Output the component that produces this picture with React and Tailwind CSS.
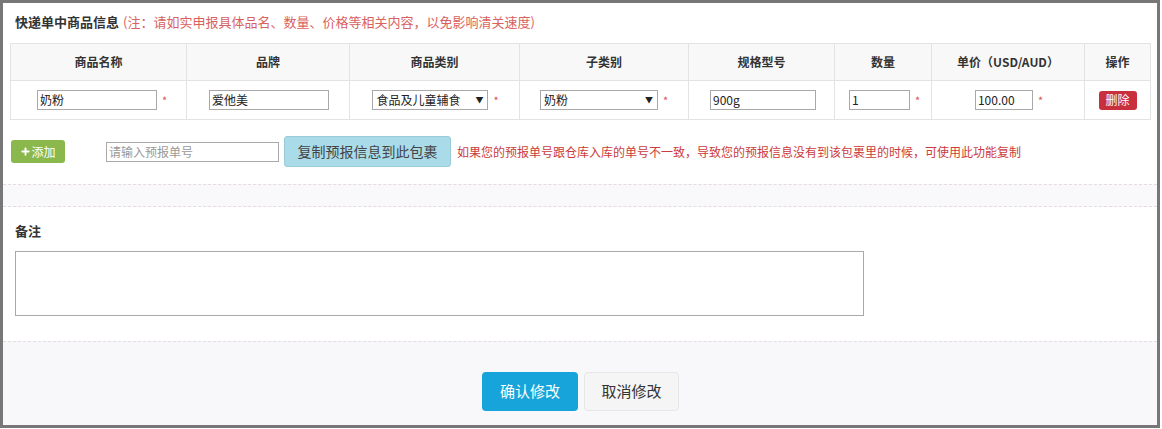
import { Plus } from 'lucide-react'

const font = { fontFamily: '"Noto Sans CJK SC", "Noto Sans", sans-serif' }

const columns = [
  { label: '商品名称', width: 'w-[176px]' },
  { label: '品牌', width: 'w-[163px]' },
  { label: '商品类别', width: 'w-[170px]' },
  { label: '子类别', width: 'w-[169px]' },
  { label: '规格型号', width: 'w-[146px]' },
  { label: '数量', width: 'w-[97px]' },
  { label: '单价（USD/AUD）', width: 'w-[153px]' },
  { label: '操作', width: 'w-[66px]' },
]

function Star() {
  return <span className="ml-[5px] text-[11px] leading-none text-[#d9534f]">*</span>
}

function TextBox({ value, width }) {
  return (
    <div className={`flex h-[20px] items-center border border-[#a9a9a9] bg-white px-[2px] text-[12px] text-[#222] ${width}`}>
      {value}
    </div>
  )
}

function Select({ value, width }) {
  return (
    <div className={`flex h-[20px] items-center justify-between border border-[#a9a9a9] bg-white pl-[3px] pr-[4px] text-[12px] text-[#222] ${width}`}>
      <span>{value}</span>
      <span className="text-[8px]">▼</span>
    </div>
  )
}

export default function App() {
  return (
    <div className="h-[429px] w-[1162px] bg-white" style={font}>
      <div className="flex h-[428px] w-[1160px] flex-col border-[3px] border-[#777777] bg-white">
        <div className="flex h-[40px] items-center pl-[12px] pb-[2px] text-[13px]">
          <span className="font-bold text-[#333]">快递单中商品信息</span>
          <span className="ml-[4px] text-[#d9625f]">(注：请如实申报具体品名、数量、价格等相关内容，以免影响清关速度)</span>
        </div>

        <div className="pl-[7px]">
          <table className="w-[1140px] table-fixed border-collapse text-[12px]">
            <thead>
              <tr className="h-[37px] bg-[#f8f8f8]">
                {columns.map(col => (
                  <th key={col.label} className={`border border-[#e3e3e3] text-center font-bold text-[#333] ${col.width}`}>
                    {col.label}
                  </th>
                ))}
              </tr>
            </thead>
            <tbody>
              <tr className="h-[39px]">
                <td className="border border-[#e3e3e3]">
                  <div className="flex items-center justify-center pl-[7px]"><TextBox value="奶粉" width="w-[120px]" /><Star /></div>
                </td>
                <td className="border border-[#e3e3e3]">
                  <div className="flex items-center justify-center pl-[2px]"><TextBox value="爱他美" width="w-[120px]" /></div>
                </td>
                <td className="border border-[#e3e3e3]">
                  <div className="flex items-center justify-center pl-[2px]"><Select value="食品及儿童辅食" width="w-[116px]" /><Star /></div>
                </td>
                <td className="border border-[#e3e3e3]">
                  <div className="flex items-center justify-center"><Select value="奶粉" width="w-[118px]" /><Star /></div>
                </td>
                <td className="border border-[#e3e3e3]">
                  <div className="flex items-center justify-center pl-[3px]"><TextBox value="900g" width="w-[106px]" /></div>
                </td>
                <td className="border border-[#e3e3e3]">
                  <div className="flex items-center justify-center pl-[3px]"><TextBox value="1" width="w-[61px]" /><Star /></div>
                </td>
                <td className="border border-[#e3e3e3]">
                  <div className="flex items-center justify-center pl-[2px]"><TextBox value="100.00" width="w-[58px]" /><Star /></div>
                </td>
                <td className="border border-[#e3e3e3]">
                  <div className="flex items-center justify-center">
                    <button className="h-[19px] w-[38px] rounded-[3px] bg-[#c9303e] text-[12px] leading-none text-white">删除</button>
                  </div>
                </td>
              </tr>
            </tbody>
          </table>
        </div>

        <div className="mt-[16px] flex h-[31px] items-center pl-[8px]">
          <button className="flex h-[23px] w-[54px] items-center justify-center rounded-[3px] bg-[#8ab84d] text-[12px] text-white">
            <Plus size={11} strokeWidth={4} />
            <span>添加</span>
          </button>
          <div className="ml-[41px] flex h-[20px] w-[173px] items-center border border-[#a9a9a9] px-[2px] text-[12px] text-[#999]">请输入预报单号</div>
          <button className="ml-[5px] h-[31px] w-[167px] rounded-[3px] border border-[#9ccbd8] bg-[#aadbe8] text-[14px] text-[#444]">复制预报信息到此包裹</button>
          <span className="ml-[6px] text-[12px] text-[#cc3b3b]">如果您的预报单号跟仓库入库的单号不一致，导致您的预报信息没有到该包裹里的时候，可使用此功能复制</span>
        </div>

        <div className="mt-[17px] h-[23px] border-y border-dashed border-[#e6dbe2] bg-[#f9f8fa]" />

        <div className="pl-[12px] pt-[14px] text-[13px] font-bold text-[#333]">备注</div>
        <div className="pl-[12px] pt-[10px]">
          <div className="h-[65px] w-[849px] border border-[#a9a9a9] bg-white" />
        </div>

        <div className="mt-[25px] flex flex-1 justify-center border-t border-dashed border-[#e6dbe2] bg-[#f8f7fa] pl-[1px] pt-[30px]">
          <button className="h-[39px] w-[96px] rounded-[4px] bg-[#17a4da] text-[15px] text-white">确认修改</button>
          <button className="ml-[6px] h-[39px] w-[95px] rounded-[4px] border border-[#e6e6e6] bg-[#f5f5f5] text-[15px] text-[#333]">取消修改</button>
        </div>
      </div>
    </div>
  )
}
